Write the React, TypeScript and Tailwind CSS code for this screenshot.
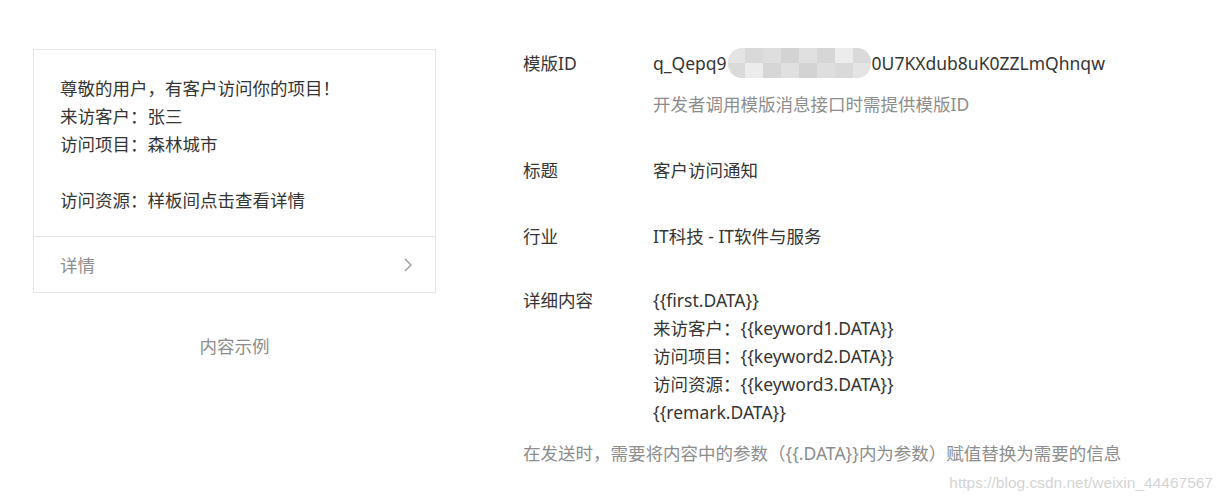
import React from 'react';

const font = { fontFamily: '"Noto Sans", "Noto Sans CJK SC", sans-serif' };

const BlurBox = () => {
  const shades = ['#e4e4e4', '#d9d9d9', '#dedede', '#d3d3d3', '#e0e0e0', '#d6d6d6', '#ececec', '#dadada'];
  return (
    <span className="inline-flex flex-col align-middle w-[143px] h-[30px] rounded-[14px] overflow-hidden mx-[1px]">
      <span className="flex flex-1">
        {shades.map((c, i) => (
          <span key={i} className="flex-1" style={{ background: c }} />
        ))}
      </span>
      <span className="flex flex-1">
        {[...shades].reverse().map((c, i) => (
          <span key={i} className="flex-1" style={{ background: c }} />
        ))}
      </span>
    </span>
  );
};

export default function App() {
  return (
    <div className="relative w-[1223px] h-[501px] bg-white text-[17.5px] leading-[28px] text-[#353535] overflow-hidden" style={font}>
      <div className="flex pl-[33px] pt-[49px]">
        {/* preview card */}
        <div className="w-[403px] shrink-0">
          <div className="border border-[#e5e5e5]">
            <div className="pl-[26px] pt-[24px] pb-[22px]">
              <div>尊敬的用户，有客户访问你的项目！</div>
              <div>来访客户：张三</div>
              <div>访问项目：森林城市</div>
              <div className="h-[28px]" />
              <div>访问资源：样板间点击查看详情</div>
            </div>
            <div className="border-t border-[#e5e5e5] h-[56px] flex items-center justify-between pl-[26px] pr-[22px] text-[#8d8d8d]">
              <span>详情</span>
              <svg width="10" height="16" viewBox="0 0 10 16" fill="none">
                <path d="M2 2l6 6-6 6" stroke="#9a9a9a" strokeWidth="1.4" />
              </svg>
            </div>
          </div>
          <div className="mt-[39px] text-center text-[#8d8d8d]">内容示例</div>
        </div>

        {/* template info */}
        <div className="ml-[87px]">
          <div className="flex">
            <div className="w-[130px] shrink-0">模版ID</div>
            <div>
              <div className="flex items-center h-[28px]">
                <span>q_Qepq9</span>
                <BlurBox />
                <span>0U7KXdub8uK0ZZLmQhnqw</span>
              </div>
              <div className="mt-[13px] text-[#8d8d8d]">开发者调用模版消息接口时需提供模版ID</div>
            </div>
          </div>
          <div className="flex mt-[38px]">
            <div className="w-[130px] shrink-0">标题</div>
            <div>客户访问通知</div>
          </div>
          <div className="flex mt-[38px]">
            <div className="w-[130px] shrink-0">行业</div>
            <div>IT科技 - IT软件与服务</div>
          </div>
          <div className="flex mt-[36px]">
            <div className="w-[130px] shrink-0">详细内容</div>
            <div>
              <div>{'{{first.DATA}}'}</div>
              <div>来访客户：{'{{keyword1.DATA}}'}</div>
              <div>访问项目：{'{{keyword2.DATA}}'}</div>
              <div>访问资源：{'{{keyword3.DATA}}'}</div>
              <div>{'{{remark.DATA}}'}</div>
            </div>
          </div>
          <div className="mt-[13px] text-[#8d8d8d]">在发送时，需要将内容中的参数（{'{{.DATA}}'}内为参数）赋值替换为需要的信息</div>
        </div>
      </div>

      <div
        className="absolute right-[10px] bottom-[8px] text-[15.5px] leading-[20px] text-[#d4d4d4]"
        style={{ fontFamily: '"Liberation Sans", Arial, sans-serif' }}
      >
        https://blog.csdn.net/weixin_44467567
      </div>
    </div>
  );
}
